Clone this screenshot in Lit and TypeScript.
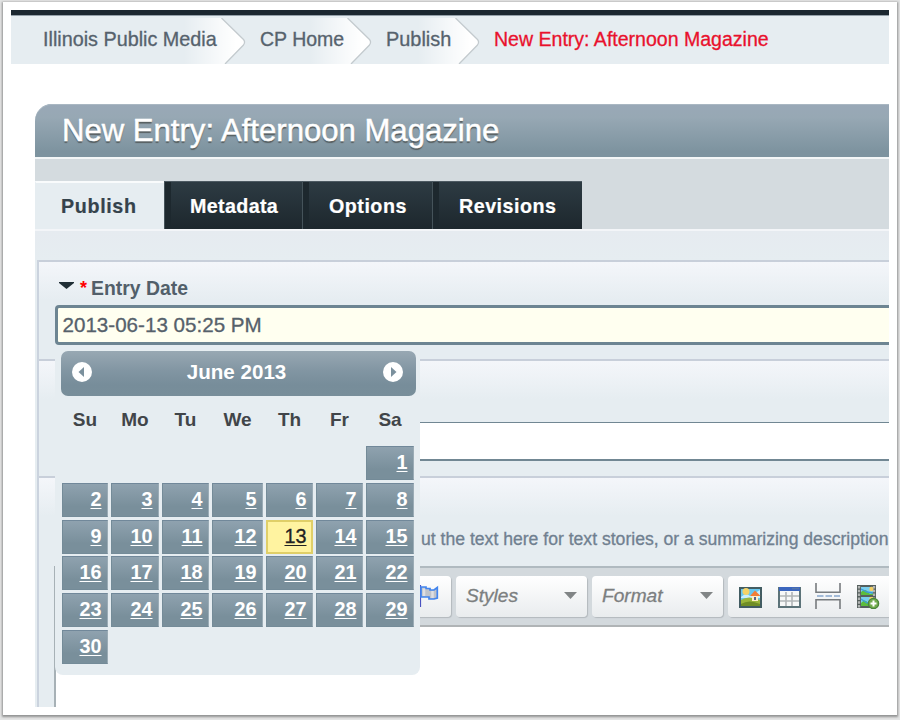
import { LitElement, html, svg, css } from "lit";
import { customElement, property } from "lit/decorators.js";

@customElement("crumb-bar")
class CrumbBar extends LitElement {
  static styles = css`
    :host { display: block; }
    .bar { display: flex; height: 49px; background: #e6edf1; border-top: 5px solid #1b2730; box-shadow: inset 0 1px #94a0a9, 0 -1px #a9b0b5; }
    .crumb { position: relative; box-sizing: border-box; line-height: 49px; padding-left: 14px; font-size: 19.8px; color: #56626d; white-space: nowrap; -webkit-text-stroke: .3px; }
    .label { position: relative; }
    .c0 { width: 235px; padding-left: 32px; }
    .c1 { width: 126px; font-size: 19.5px; }
    .c2 { width: 108px; font-size: 19.9px; }
    .current { color: #e9112d; font-size: 19.55px; }
    .arrow { position: absolute; right: 0; top: 3px; }
  `;
  render() {
    return html`<nav class="bar">
      ${["Illinois Public Media", "CP Home", "Publish"].map(
        (t, i) => html`<span class="crumb c${i}">
          <svg class="arrow" width="62" height="46" viewBox="0 0 62 46">
            <defs><linearGradient id="g"><stop offset="0" stop-color="#fff" stop-opacity="0" /><stop offset=".62" stop-color="#fff" stop-opacity=".75" /><stop offset=".85" stop-color="#fff" /></linearGradient></defs>
            <path d="M0 0H37.500L59.500 21Q62 24 59.500 27L41 46H0Z" fill="url(#g)" />
            <path d="M37.500 0L59.500 21.500Q61.600 24 59.500 27L41 46" fill="none" stroke="#c3cace" stroke-width="1.300" />
          </svg><span class="label">${t}</span></span>`
      )}
      <span class="crumb current">New Entry: Afternoon Magazine</span>
    </nav>`;
  }
}

@customElement("date-picker")
class DatePicker extends LitElement {
  static styles = css`
    :host { display: block; box-sizing: border-box; width: 365px; height: 329px; padding: 5px 4px 0 6px; background: #e6edf1; border-radius: 0 0 8px 8px; }
    .head { display: flex; align-items: center; justify-content: space-between; box-sizing: border-box; height: 45px; padding: 0 13px 3px 11px; border-radius: 7px; background: linear-gradient(#98a8b3, #8195a2 45%, #778d9a 75%, #788e9a); color: #fff; font-weight: bold; font-size: 20.6px; line-height: 42px; }
    .month { margin-right: 2px; text-shadow: 0 1px 1px #7890a0; }
    .grid { display: grid; grid-template-columns: 46px 48px 47px 51px 47px 47px 48px; column-gap: 3px; margin-left: 1px; }
    .names { height: 47px; margin-bottom: 3px; line-height: 47px; font-weight: bold; font-size: 19px; color: #414549; text-align: center; }
    .days { grid-auto-rows: 34px; row-gap: 2.8px; }
    .day { box-sizing: border-box; border: 1px solid #748b98; border-top-color: #71889a; border-right-color: #9bacb6; background: linear-gradient(#8fa2af, #798f9b 70%); color: #fff; font-size: 19.8px; font-weight: bold; line-height: 30px; text-align: right; padding-right: 5.5px; text-decoration: underline; text-decoration-thickness: 1.3px; text-underline-offset: 2px; text-decoration-skip-ink: none; }
    .today { background: #fff3a0; border: 2px solid #e0cf68; padding-right: 4.5px; line-height: 28px; color: #222; font-weight: normal; -webkit-text-stroke: .3px; }
    .first { grid-column: 7; }
  `;
  render() {
    const cls = (d: number) => "day" + (d === 1 ? " first" : "") + (d === 13 ? " today" : "");
    return html`
      <div class="head">
        <svg width="20" height="20"><circle cx="10" cy="10" r="10" fill="#fff" /><path d="M12 5V15L6.500 10Z" fill="#7b909d" /></svg>
        <span class="month">June 2013</span>
        <svg width="20" height="20"><circle cx="10" cy="10" r="10" fill="#fff" /><path d="M8 5V15L13.500 10Z" fill="#7b909d" /></svg>
      </div>
      <div class="grid names">${["Su", "Mo", "Tu", "We", "Th", "Fr", "Sa"].map((n) => html`<span>${n}</span>`)}</div>
      <div class="grid days">${Array.from({ length: 30 }, (_, i) => html`<a class=${cls(i + 1)}>${i + 1}</a>`)}</div>
    `;
  }
}

@customElement("tool-icon")
class ToolIcon extends LitElement {
  @property() name = "";
  static styles = css`:host { display: block; height: 26px; } svg { display: block; }`;
  render() {
    const scene = (y: number, h: number) => svg`
      <rect x="5" y=${y} width="12" height=${h} fill="#79cfee" /><circle cx="15.500" cy=${y + 2} r="2.200" fill="#f3cf63" />
      <path d="M5 ${y + h}V${y + h - 3}Q9 ${y + 1} 12 ${y + h - 3}T17 ${y + h - 3}V${y + h}Z" fill="#5cbd3e" /><path d="M5 ${y + 2}L11 ${y + h - 3}L17 ${y + h - 2}" fill="none" stroke="#3c9bdc" stroke-width="1.300" />`;
    const icons: Record<string, unknown> = {
      flag: svg`<path d="M1.200 2V24" stroke="#4a52c0" stroke-width="1.800" /><path d="M2 4H7V5.500H11V7H15L18.300 4.500V15L15 16H10V14H2Z" fill="#bfc3ca" stroke="#4285ee" stroke-width="1.700" /><path d="M5 5.500V13M13.500 8V15" stroke="#dedfe2" stroke-width="2.500" />`,
      image: svg`<rect x="1" y="5" width="21" height="19" fill="#69c8ef" stroke="#425c62" stroke-width="2" /><path d="M2 14Q7 9 11 13L21 7V15H2Z" fill="#c8efff" /><circle cx="7" cy="8.500" r="3.500" fill="#f4d368" /><path d="M2 17Q9 12 21 17V23H2Z" fill="#9bb63b" /><path d="M2 21Q10 16 21 21V23H2Z" fill="#708d25" /><path d="M13 12H19V18H13Z" fill="#fff0c9" /><path d="M11 13L16 7.500L21.500 13Z" fill="#f27d35" /><path d="M15 14H17V17H15Z" fill="#5a6288" />`,
      table: svg`<rect x="1" y="5" width="21" height="19" fill="#f7f8f8" stroke="#5c7379" stroke-width="2" /><path d="M1 4H22V8H1Z" fill="#3b66be" /><path d="M14 5.500H21" stroke="#5475a8" stroke-width="1.500" /><path d="M2 13H21M2 18H21M8 9V23M14 9V23" stroke="#b1b5b7" stroke-width="1.600" />`,
      pagebreak: svg`<path d="M1 0V9.200H25V0M1 26V16.800H25V26" fill="none" stroke="#777b7e" stroke-width="1.600" /><path d="M2 13H25" stroke="#88a8ce" stroke-width="1.700" stroke-dasharray="6.500 2" />`,
      film: svg`<rect x="1" y="2" width="19" height="23" fill="#555f5d" />${scene(4, 8)}${scene(14, 9)}<path d="M3 3V25M18 3V25" stroke="#b2b5b4" stroke-width="2.300" stroke-dasharray="2.500 1.300" /><path d="M5 13H17" stroke="#58605e" stroke-width="1.500" /><circle cx="17.500" cy="20.500" r="5.200" fill="#72aa4d" stroke="#4a853b" stroke-width="1.200" /><path d="M14.500 20.500H20.500M17.500 17.500V23.500" stroke="#fff" stroke-width="2" />`,
    };
    return html`<svg width="26" height="26" viewBox="0 0 26 26">${icons[this.name]}</svg>`;
  }
}

@customElement("app-root")
class AppRoot extends LitElement {
  static styles = css`
    :host { display: block; width: 900px; height: 720px; overflow: hidden; background: #e3e4e4; font-family: "Liberation Sans", Arial, sans-serif; padding: 2px 3px 5px; box-sizing: border-box; }
    .sheet { box-sizing: border-box; height: 713px; padding: 8px 8px 8px; background: #fff; box-shadow: 0 1px 2px 1px #929292; }
    .view { height: 697px; overflow: hidden; }
    .panel { margin: 40px 0 0 24px; height: 603px; background: #e6edf1; }
    .title { height: 53px; box-sizing: border-box; padding-left: 27px; border-radius: 17px 0 0 0; line-height: 53px; background: linear-gradient(#99a8b7, #97a8b4 25%, #7d939f 90%, #7d939f); box-shadow: inset 0 1px #a9b7c2; color: #fff; font-size: 31.1px; -webkit-text-stroke: .5px; text-shadow: 0 1.5px 1px #565e60; }
    .panel-top { background: #fff; }
    .tabs { display: flex; align-items: flex-end; height: 70px; background: #d4dbdf; border-top: 2px solid #f3f6f7; border-bottom: 2px solid #f3f5f8; }
    .tab { box-sizing: border-box; height: 48px; line-height: 48px; font-weight: bold; font-size: 19.7px; letter-spacing: .5px; color: #fff; background: linear-gradient(90deg, #1d282e 6px, transparent 6px), linear-gradient(#2d3b43, #1d272d); border-top: 1px solid #4d5a62; border-left: 1px solid #45535a; padding-left: 25px; -webkit-text-stroke: .2px; }
    .tab.active { width: 129px; background: #e6edf1; color: #35434c; letter-spacing: .65px; border-top: 2px solid #f9fbfc; border-left: 1px solid #e6edf1; line-height: 46px; }
    .t1 { width: 138px; letter-spacing: .35px; }
    .t2 { width: 130px; padding-left: 26px; }
    .t3 { width: 150px; padding-left: 26px; }
    .gap { height: 29px; background: linear-gradient(#e6ebf0, #e6edf1); }
    .fields { margin-left: 2px; border-left: 2px solid #cbd3de; height: 447px; }
    .field { position: relative; box-sizing: border-box; border-top: 2px solid #c8cfda; background: linear-gradient(#f4f6fa, #e6edf1 38px); }
    .date { height: 99px; padding-left: 16px; z-index: 1; }
    .name { display: flex; align-items: center; height: 43px; padding: 9px 0 0 4px; box-sizing: border-box; font-size: 19.4px; font-weight: bold; color: #525f6a; }
    .caret { display: block; margin: -5px 6px 0 0; }
    .star { color: #f00; margin-right: 4px; font-size: 18px; }
    .input { box-sizing: border-box; height: 40px; border: 3px solid #6d8592; border-right: 0; border-radius: 4px 0 0 4px; background: #fffff0; padding-left: 4.5px; line-height: 34px; font-size: 20.6px; color: #56616b; -webkit-text-stroke: .3px; }
    .picker { position: absolute; left: 16px; top: 84px; }
    .summary { height: 117px; padding: 61px 0 0 16px; }
    .blank { height: 36px; background: #fff; border: 2px solid #718793; border-top-width: 1.5px; border-right: 0; }
    .body { height: 231px; padding-left: 15px; }
    .hint { height: 88px; box-sizing: border-box; padding: 51px 0 0 367px; font-size: 17.6px; line-height: 20px; color: #708090; white-space: nowrap; -webkit-text-stroke: .3px; }
    .editor { height: 141px; box-sizing: border-box; border-left: 2px solid #a7b1b6; background: #fff; }
    .toolbar { display: flex; gap: 5px; box-sizing: border-box; height: 61px; padding-top: 8px; background: #d3d9dd; border-top: 2px solid #b0bac0; border-bottom: 2px solid #b0b4b6; }
    .group { display: flex; flex: none; box-sizing: border-box; height: 41px; border-radius: 4px; background: linear-gradient(#fff, #e9ecee); box-shadow: 1px 1px 1px #b3b9bd; }
    .g0 { width: 395px; padding: 7px 0 0 363px; }
    .drop { width: 131px; align-items: center; justify-content: space-between; padding: 0 10px 2px 10px; font-style: italic; font-size: 19.1px; color: #7c7f80; -webkit-text-stroke: .3px; }
    .icons { width: 170px; border-radius: 4px 0 0 4px; padding: 7px 0 0 11px; gap: 12.6px; }
    .icons tool-icon:nth-child(3) { margin-left: -1px; }
    .icons tool-icon:nth-child(4) { margin-left: 2px; }
  `;
  render() {
    const arrow = html`<svg width="13" height="7"><path d="M0 0H13L6.500 7Z" fill="#818586" /></svg>`;
    return html`<div class="sheet"><div class="view">
      <crumb-bar></crumb-bar>
      <main class="panel">
        <div class="panel-top"><div class="title">New Entry: Afternoon Magazine</div></div>
        <div class="tabs">
          <div class="tab active">Publish</div>
          <div class="tab t1">Metadata</div>
          <div class="tab t2">Options</div>
          <div class="tab t3">Revisions</div>
        </div>
        <div class="gap"></div>
        <div class="fields">
          <section class="field date">
            <div class="name"><svg class="caret" width="15" height="7"><path d="M0 0H15V1L7.500 7L0 1Z" fill="#202e35" /></svg><span class="star">*</span>Entry Date</div>
            <div class="input">2013-06-13 05:25 PM</div>
            <date-picker class="picker"></date-picker>
          </section>
          <section class="field summary"><div class="blank"></div></section>
          <section class="field body">
            <div class="hint">ut the text here for text stories, or a summarizing description</div>
            <div class="editor">
              <div class="toolbar">
                <div class="group g0"><tool-icon name="flag"></tool-icon></div>
                <div class="group drop">Styles${arrow}</div>
                <div class="group drop">Format${arrow}</div>
                <div class="group icons">${["image", "table", "pagebreak", "film"].map((n) => html`<tool-icon name=${n}></tool-icon>`)}</div>
              </div>
            </div>
          </section>
        </div>
      </main>
    </div></div>`;
  }
}
